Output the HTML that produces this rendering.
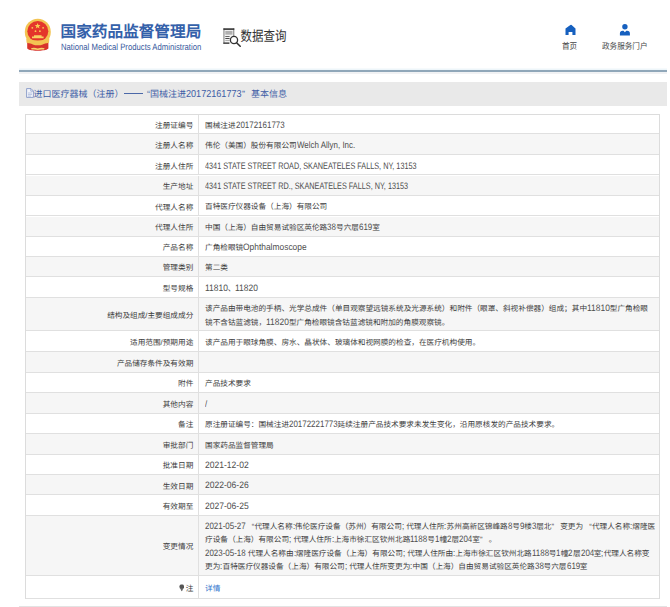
<!DOCTYPE html>
<html lang="zh-CN">
<head>
<meta charset="utf-8">
<style>
html,body{margin:0;padding:0;text-rendering:geometricPrecision;}
body{width:670px;height:607px;overflow:hidden;background:#fff;position:relative;font-family:"Liberation Sans",sans-serif;color:#333;}
.abs{position:absolute;}
#hdr{position:absolute;left:0;top:0;width:670px;height:70px;background:#fff;}
.title{position:absolute;left:60.5px;top:19px;font-size:15.65px;font-weight:bold;color:#3461aa;white-space:nowrap;letter-spacing:0;}
.en{position:absolute;left:61px;top:41.5px;font-family:"Liberation Sans",sans-serif;font-size:9.2px;color:#36589c;white-space:nowrap;transform:scaleX(0.84);transform-origin:0 0;}
.sq{position:absolute;left:240.6px;top:26px;font-size:11.5px;color:#333;white-space:nowrap;transform:scaleY(1.22);transform-origin:0 0;}
.navt{position:absolute;font-size:7.6px;color:#454545;white-space:nowrap;transform:scaleY(1.12);transform-origin:0 0;}
#line{position:absolute;left:19px;top:70px;width:648px;height:2px;background:#90a7b9;box-shadow:0 -1.5px 0 #eef6fa, 0 2px 0 #f1f2f4;}
#bc{position:absolute;left:19px;top:82px;width:648px;height:23.5px;background:#e9e9e9;}
#bc .t{position:absolute;top:5px;font-family:"Liberation Sans",sans-serif;font-size:9px;color:#3e5da6;white-space:nowrap;}
#tbl{position:absolute;left:25px;top:114px;width:635px;height:484.5px;border:1px solid #dcdcdc;border-bottom:none;box-sizing:border-box;}
.r{position:absolute;left:0;right:0;border-bottom:1px solid #e0e0e0;box-sizing:border-box;}
.r.g{background:#f6f6f6;}
.r .l{position:absolute;left:0;top:0;bottom:0;width:172.3px;border-right:1px solid #e0e0e0;}
.r .l span{position:absolute;right:5px;top:50%;transform:translateY(-35%);font-size:7.65px;letter-spacing:0;color:#3c3c3c;white-space:nowrap;font-weight:500;}
.r .v{position:absolute;left:179px;right:0;top:1.5px;bottom:-1.5px;display:flex;align-items:center;font-size:7.65px;letter-spacing:0;color:#3c3c3c;line-height:13.4px;white-space:nowrap;font-weight:500;}
.cap{display:inline-block;font-family:"Liberation Sans",sans-serif;font-size:9.4px;letter-spacing:0;color:#4e4e4e;transform:scaleX(0.776);transform-origin:0 50%;}
.lnk{color:#3174cc;}
.ql{display:inline-block;width:6.6px;text-align:right;}
.qr{display:inline-block;width:6.6px;text-align:left;}
/*LEXTRA*/.L{display:inline-block;white-space:pre;position:relative;}
.L i{font-style:normal;display:inline-block;font-family:"Liberation Sans",sans-serif;font-size:9.3px;transform:scaleX(0.8555);transform-origin:0 50%;color:#4e4e4e;}
/*END*/</style>
</head>
<body>
<div id="hdr">
  <svg class="abs" style="left:24px;top:18px" width="28" height="34" viewBox="0 0 28 34">
    <path d="M3.2 23 L3.2 30.5 Q5 32.6 8.5 32.2 Q13.8 33.4 19 32.2 Q22.6 32.6 24.4 30.5 L24.4 23 Z" fill="#d7332b"/>
    <ellipse cx="13.8" cy="14" rx="13" ry="13.3" fill="#f3c453"/>
    <ellipse cx="13.8" cy="13.2" rx="10.5" ry="10.3" fill="#e4352b"/>
    <path d="M13.6 5 l0.8 2 2.1 0.1 -1.6 1.3 .6 2 -1.9 -1.2 -1.8 1.2 .6 -2 -1.6 -1.3 2.1 -0.1z" fill="#f8cd52"/>
    <circle cx="8.3" cy="9.8" r="0.9" fill="#f8cd52"/><circle cx="19.1" cy="9.8" r="0.9" fill="#f8cd52"/>
    <circle cx="11.5" cy="13.2" r="0.9" fill="#f8cd52"/><circle cx="15.9" cy="13.2" r="0.9" fill="#f8cd52"/>
    <path d="M10 17.2 L17.6 17.2 L17.6 18.6 L19.6 18.6 L19.6 20.2 L8 20.2 L8 18.6 L10 18.6Z" fill="#f8d060"/>
    <path d="M2.2 20.5 Q13.8 24.5 25.4 20.5 L25 24.8 Q20 26.5 16.8 24.6 Q13.8 27.2 10.8 24.6 Q7.6 26.5 2.6 24.8Z" fill="#f3c453"/>
    <path d="M7 30.3 Q10 29 13.8 30.6 Q17.6 29 20.6 30.3 L20 31.6 Q17 31 13.8 32 Q10.6 31 7.6 31.6Z" fill="#f6d36a"/>
  </svg>
  <div class="title">国家药品监督管理局</div>
  <div class="en">National Medical Products Administration</div>
  <svg class="abs" style="left:222px;top:26px" width="20" height="22" viewBox="0 0 20 22">
    <rect x="1.4" y="2.3" width="10.9" height="15.6" fill="#f4f4f4"/>
    <rect x="1.4" y="2.3" width="1.1" height="15.6" fill="#8a8a8a"/>
    <rect x="11.2" y="2.3" width="1.1" height="8" fill="#8a8a8a"/>
    <rect x="1.4" y="2.3" width="10.9" height="1.6" fill="#333"/>
    <rect x="1.4" y="16.4" width="6" height="1.5" fill="#444"/>
    <rect x="3.3" y="4.9" width="7.2" height="3.8" fill="#b0b0b0"/>
    <rect x="3.3" y="10.1" width="4.3" height="0.9" fill="#555"/>
    <rect x="3.3" y="12.1" width="4.3" height="0.9" fill="#333"/>
    <rect x="3.3" y="14.1" width="4.3" height="0.9" fill="#aaa"/>
    <circle cx="12" cy="14" r="3.6" fill="#fff" stroke="#333" stroke-width="1.3"/>
    <line x1="14.6" y1="16.7" x2="18.2" y2="20.2" stroke="#333" stroke-width="1.6" stroke-linecap="round"/>
  </svg>
  <div class="sq">数据查询</div>
  <svg class="abs" style="left:564.6px;top:24px" width="12" height="12" viewBox="0 0 12 12">
    <path d="M5.4 1.1 Q6 0.6 6.6 1.1 L10.5 4.6 L10.5 11 L7.4 11 L7.4 7.9 L3.6 7.9 L3.6 11 L0.5 11 L0.5 4.6Z" fill="#1660bf"/>
  </svg>
  <div class="navt" style="left:562px;top:40.4px">首页</div>
  <svg class="abs" style="left:619px;top:24px" width="12" height="12" viewBox="0 0 12 12">
    <circle cx="5.9" cy="2.8" r="2.7" fill="#1660bf"/>
    <path d="M0.9 11.4 L0.9 9.4 Q0.9 6.7 3.7 6.7 L4.5 6.7 L5.9 8.3 L7.3 6.7 L8.1 6.7 Q10.9 6.7 10.9 9.4 L10.9 11.4Z" fill="#1660bf"/>
  </svg>
  <div class="navt" style="left:602px;top:40.4px">政务服务门户</div>
</div>
<div id="line"></div>
<div id="bc">
  <svg class="abs" style="left:6.5px;top:6.3px" width="8" height="10" viewBox="0 0 8 10"><path d="M0.6 0.6 L5 0.6 L7.4 3 L7.4 9.4 L0.6 9.4Z" fill="#f3f5fb" stroke="#8497c6" stroke-width="0.9"/><path d="M4.8 0.8 L4.8 3.2 L7.2 3.2" fill="none" stroke="#8497c6" stroke-width="0.7"/><path d="M2 5 H6 M2 6.6 H6 M2 8.1 H5" stroke="#9fb0d6" stroke-width="0.7"/></svg>
  <div class="t" style="left:14.5px">进口医疗器械（注册）</div>
  <div class="abs" style="left:105px;top:11.3px;width:19px;height:1px;background:#4b68a8"></div>
  <div class="t" style="left:128px">“国械注进<span style="display:inline-block;width:56px;vertical-align:baseline"><i style="font-style:normal;display:inline-block;font-size:10.1px;transform:scaleX(0.9);transform-origin:0 50%">20172161773</i></span>”</div>
  <div class="t" style="left:232px">基本信息</div>
</div>
<div id="tbl">
<div class="r" style="top:0.0px;height:18.8px"><div class="l"><span>注册证编号</span></div><div class="v"><div>国械注进<span class="L" style="width:48.56px"><i>20172161773</i></span></div></div></div>
<div class="r g" style="top:18.8px;height:21.0px"><div class="l"><span>注册人名称</span></div><div class="v"><div>伟伦（美国）股份有限公司<span class="L" style="width:58.09px"><i>Welch Allyn, Inc.</i></span></div></div></div>
<div class="r" style="top:39.8px;height:20.7px"><div class="l"><span>注册人住所</span></div><div class="v"><div><span class="cap">4341 STATE STREET ROAD, SKANEATELES FALLS, NY, 13153</span></div></div></div>
<div class="r g" style="top:60.5px;height:20.4px"><div class="l"><span>生产地址</span></div><div class="v"><div><span class="cap">4341 STATE STREET RD., SKANEATELES FALLS, NY, 13153</span></div></div></div>
<div class="r" style="top:80.9px;height:20.6px"><div class="l"><span>代理人名称</span></div><div class="v"><div>百特医疗仪器设备（上海）有限公司</div></div></div>
<div class="r g" style="top:101.5px;height:20.4px"><div class="l"><span>代理人住所</span></div><div class="v"><div>中国（上海）自由贸易试验区英伦路<span class="L" style="width:8.84px"><i>38</i></span>号六层<span class="L" style="width:13.25px"><i>619</i></span>室</div></div></div>
<div class="r" style="top:121.9px;height:19.9px"><div class="l"><span>产品名称</span></div><div class="v"><div>广角检眼镜<span class="L" style="width:63.52px"><i style="transform:scaleX(0.9054)">Ophthalmoscope</i></span></div></div></div>
<div class="r g" style="top:141.8px;height:20.4px"><div class="l"><span>管理类别</span></div><div class="v"><div>第二类</div></div></div>
<div class="r" style="top:162.2px;height:20.8px"><div class="l"><span>型号规格</span></div><div class="v"><div><span class="L" style="width:22.78px"><i style="transform:scaleX(0.9072)">11810</i></span>、<span class="L" style="width:22.78px"><i style="transform:scaleX(0.9072)">11820</i></span></div></div></div>
<div class="r g" style="top:183.0px;height:33.1px"><div class="l"><span>结构及组成/主要组成成分</span></div><div class="v"><div>该产品由带电池的手柄、光学总成件（单目观察望远镜系统及光源系统）和附件（眼罩、斜视补偿器）组成；其中<span class="L" style="width:22.78px"><i style="transform:scaleX(0.9072)">11810</i></span>型广角检眼<br>镜不含钴蓝滤镜，<span class="L" style="width:22.78px"><i style="transform:scaleX(0.9072)">11820</i></span>型广角检眼镜含钴蓝滤镜和附加的角膜观察镜。</div></div></div>
<div class="r" style="top:216.1px;height:20.9px"><div class="l"><span>适用范围/预期用途</span></div><div class="v"><div>该产品用于眼球角膜、房水、晶状体、玻璃体和视网膜的检查，在医疗机构使用。</div></div></div>
<div class="r g" style="top:237.0px;height:20.7px"><div class="l"><span>产品储存条件及有效期</span></div><div class="v"><div></div></div></div>
<div class="r" style="top:257.7px;height:20.3px"><div class="l"><span>附件</span></div><div class="v"><div>产品技术要求</div></div></div>
<div class="r g" style="top:278.0px;height:20.5px"><div class="l"><span>其他内容</span></div><div class="v"><div><span class="L" style="width:2.22px"><i>/</i></span></div></div></div>
<div class="r" style="top:298.5px;height:20.4px"><div class="l"><span>备注</span></div><div class="v"><div>原注册证编号：国械注进<span class="L" style="width:48.56px"><i>20172221773</i></span>延续注册产品技术要求未发生变化，沿用原核发的产品技术要求。</div></div></div>
<div class="r g" style="top:318.9px;height:20.8px"><div class="l"><span>审批部门</span></div><div class="v"><div>国家药品监督管理局</div></div></div>
<div class="r" style="top:339.7px;height:20.2px"><div class="l"><span>批准日期</span></div><div class="v"><div><span class="L" style="width:43.61px"><i style="transform:scaleX(0.9187)">2021-12-02</i></span></div></div></div>
<div class="r g" style="top:359.9px;height:20.3px"><div class="l"><span>生效日期</span></div><div class="v"><div><span class="L" style="width:43.61px"><i style="transform:scaleX(0.9187)">2022-06-26</i></span></div></div></div>
<div class="r" style="top:380.2px;height:20.6px"><div class="l"><span>有效期至</span></div><div class="v"><div><span class="L" style="width:43.61px"><i style="transform:scaleX(0.9187)">2027-06-25</i></span></div></div></div>
<div class="r g" style="top:400.8px;height:60.1px"><div class="l"><span>变更情况</span></div><div class="v"><div><span class="L" style="width:42.81px"><i>2021-05-27 </i></span><span class="ql">“</span>代理人名称<span class="L" style="width:2.22px"><i>:</i></span>伟伦医疗设备（苏州）有限公司<span class="L" style="width:4.42px"><i>; </i></span>代理人住所<span class="L" style="width:2.22px"><i>:</i></span>苏州高新区锦峰路<span class="L" style="width:4.42px"><i>8</i></span>号<span class="L" style="width:4.42px"><i>9</i></span>楼<span class="L" style="width:4.42px"><i>3</i></span>层北<span class="qr">”</span> 变更为 <span class="ql">“</span>代理人名称<span class="L" style="width:2.22px"><i>:</i></span>熠隆医<br>疗设备（上海）有限公司<span class="L" style="width:4.42px"><i>; </i></span>代理人住所<span class="L" style="width:2.22px"><i>:</i></span>上海市徐汇区钦州北路<span class="L" style="width:17.08px"><i>1188</i></span>号<span class="L" style="width:4.42px"><i>1</i></span>幢<span class="L" style="width:4.42px"><i>2</i></span>层<span class="L" style="width:13.25px"><i>204</i></span>室<span class="qr">”</span> 。<br><span class="L" style="width:42.81px"><i>2023-05-18 </i></span>代理人名称由<span class="L" style="width:2.22px"><i>:</i></span>熠隆医疗设备（上海）有限公司<span class="L" style="width:4.42px"><i>; </i></span>代理人住所由<span class="L" style="width:2.22px"><i>:</i></span>上海市徐汇区钦州北路<span class="L" style="width:17.08px"><i>1188</i></span>号<span class="L" style="width:4.42px"><i>1</i></span>幢<span class="L" style="width:4.42px"><i>2</i></span>层<span class="L" style="width:13.25px"><i>204</i></span>室<span class="L" style="width:2.22px"><i>;</i></span>代理人名称变<br>更为<span class="L" style="width:2.22px"><i>:</i></span>百特医疗仪器设备（上海）有限公司<span class="L" style="width:4.42px"><i>; </i></span>代理人住所变更为<span class="L" style="width:2.22px"><i>:</i></span>中国（上海）自由贸易试验区英伦路<span class="L" style="width:8.84px"><i>38</i></span>号六层<span class="L" style="width:13.25px"><i>619</i></span>室</div></div></div>
<div class="r" style="top:460.9px;height:22.9px"><div class="l"><span><svg width="5.5" height="7.5" viewBox="0 0 5.5 7.5" style="vertical-align:-0.5px;margin-right:1.5px"><circle cx="2.75" cy="2.6" r="2.4" fill="#555"/><path d="M1.2 4.2 L4.3 4.2 L2.9 7.4 L2.6 7.4Z" fill="#666"/></svg>注</span></div><div class="v"><div><span class="lnk">详情</span></div></div></div>
</div>
<div class="abs" style="left:19px;top:606px;width:648px;height:1px;background:#e3e3e3"></div>
</body>
</html>
